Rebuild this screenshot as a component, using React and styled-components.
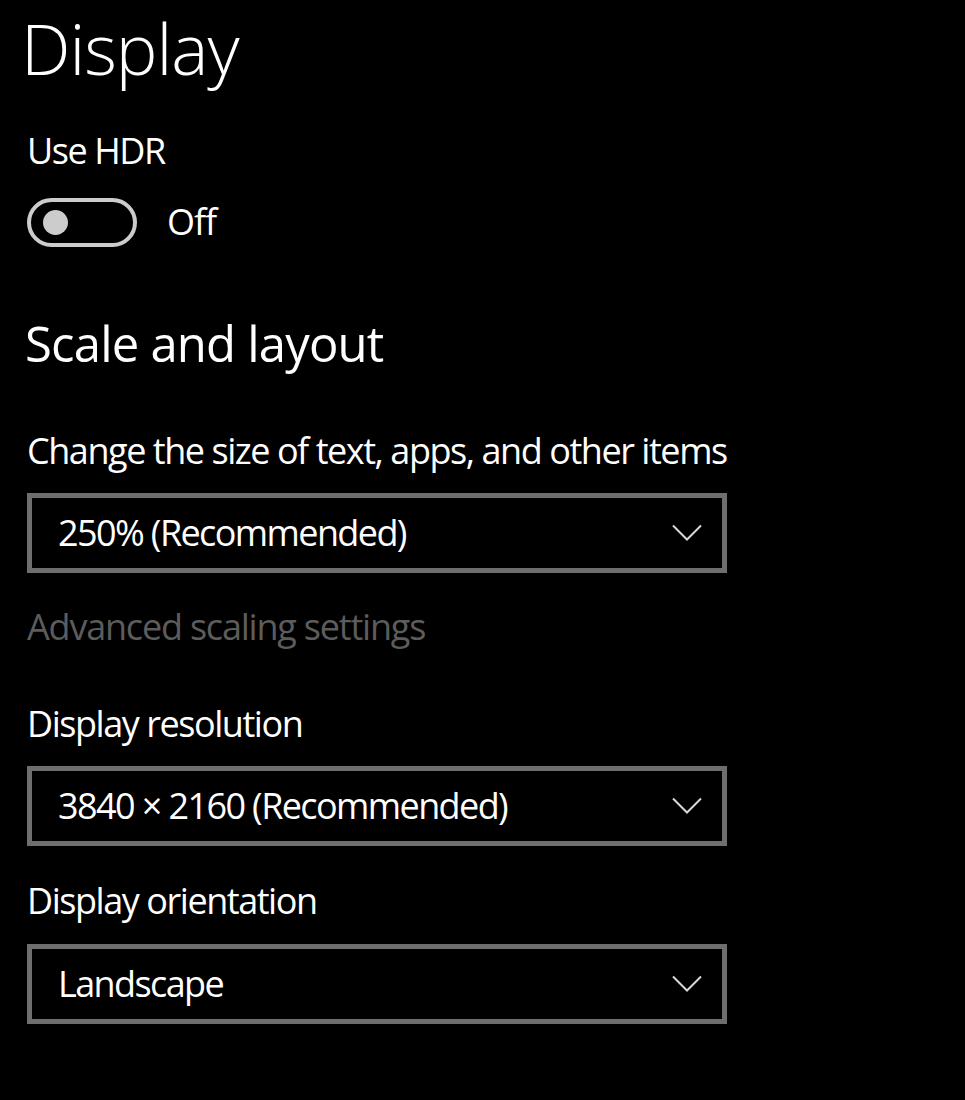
import React from "react";
import styled, { createGlobalStyle } from "styled-components";

const Global = createGlobalStyle`
  html, body { margin: 0; padding: 0; background: #000; }
  body { font-family: "Open Sans", "Noto Sans", sans-serif; color: #fff; }
`;

const Page = styled.main`
  display: flex;
  flex-direction: column;
  align-items: flex-start;
  padding: 13px 0 60px 27px;
  min-height: 1100px;
  box-sizing: border-box;
  background: #000;
`;

const Title = styled.h1`
  margin: 0 0 0 -6px;
  font-size: 70px;
  line-height: 1;
  font-weight: 300;
  letter-spacing: -1px;
`;

const Subtitle = styled.h2`
  margin: ${(p) => p.$top}px 0 0 -2px;
  font-size: 49px;
  line-height: 1;
  font-weight: 400;
  letter-spacing: -0.8px;
`;

const Label = styled.div`
  margin-top: ${(p) => p.$top}px;
  font-size: 36px;
  line-height: 1;
  font-weight: 400;
  letter-spacing: ${(p) => (p.$disabled ? "-1.2px" : "-1.45px")};
  color: ${(p) => (p.$disabled ? "#5c5c5c" : "#fff")};
`;

const ToggleRow = styled.div`
  display: flex;
  align-items: center;
  gap: 30px;
  margin-top: 29px;
`;

const Track = styled.div`
  width: 110px;
  height: 49px;
  box-sizing: border-box;
  border: 4px solid #cccccc;
  border-radius: 25px;
  display: flex;
  align-items: center;
  padding-left: 12px;
`;

const Knob = styled.span`
  width: 25px;
  height: 25px;
  border-radius: 50%;
  background: #cccccc;
`;

const ToggleText = styled.span`
  font-size: 36px;
  line-height: 1;
  letter-spacing: -1px;
  padding-bottom: 2px;
`;

const Select = styled.div`
  margin-top: ${(p) => p.$top}px;
  width: 700px;
  height: 80px;
  box-sizing: border-box;
  border: 5px solid #6e6e6e;
  display: flex;
  align-items: center;
  justify-content: space-between;
  padding: 0 19px 0 26px;
`;

const SelectText = styled.span`
  font-size: 36px;
  line-height: 1;
  letter-spacing: -1.6px;
  color: #fff;
`;

const Chevron = () => (
  <svg width="32" height="18" viewBox="0 0 32 18" fill="none">
    <path d="M2 1.5 L16 15.5 L30 1.5" stroke="#d8d8d8" strokeWidth="2" />
  </svg>
);

const Dropdown = ({ top, value }) => (
  <Select $top={top}>
    <SelectText>{value}</SelectText>
    <Chevron />
  </Select>
);

export default function App() {
  return (
    <>
      <Global />
      <Page>
        <Title>Display</Title>
        <Label $top={50}>Use HDR</Label>
        <ToggleRow>
          <Track>
            <Knob />
          </Track>
          <ToggleText>Off</ToggleText>
        </ToggleRow>
        <Subtitle $top={72}>Scale and layout</Subtitle>
        <Label $top={65}>Change the size of text, apps, and other items</Label>
        <Dropdown top={24} value="250% (Recommended)" />
        <Label $top={36} $disabled>
          Advanced scaling settings
        </Label>
        <Label $top={61}>Display resolution</Label>
        <Dropdown top={24} value="3840 × 2160 (Recommended)" />
        <Label $top={37}>Display orientation</Label>
        <Dropdown top={25} value="Landscape" />
      </Page>
    </>
  );
}
